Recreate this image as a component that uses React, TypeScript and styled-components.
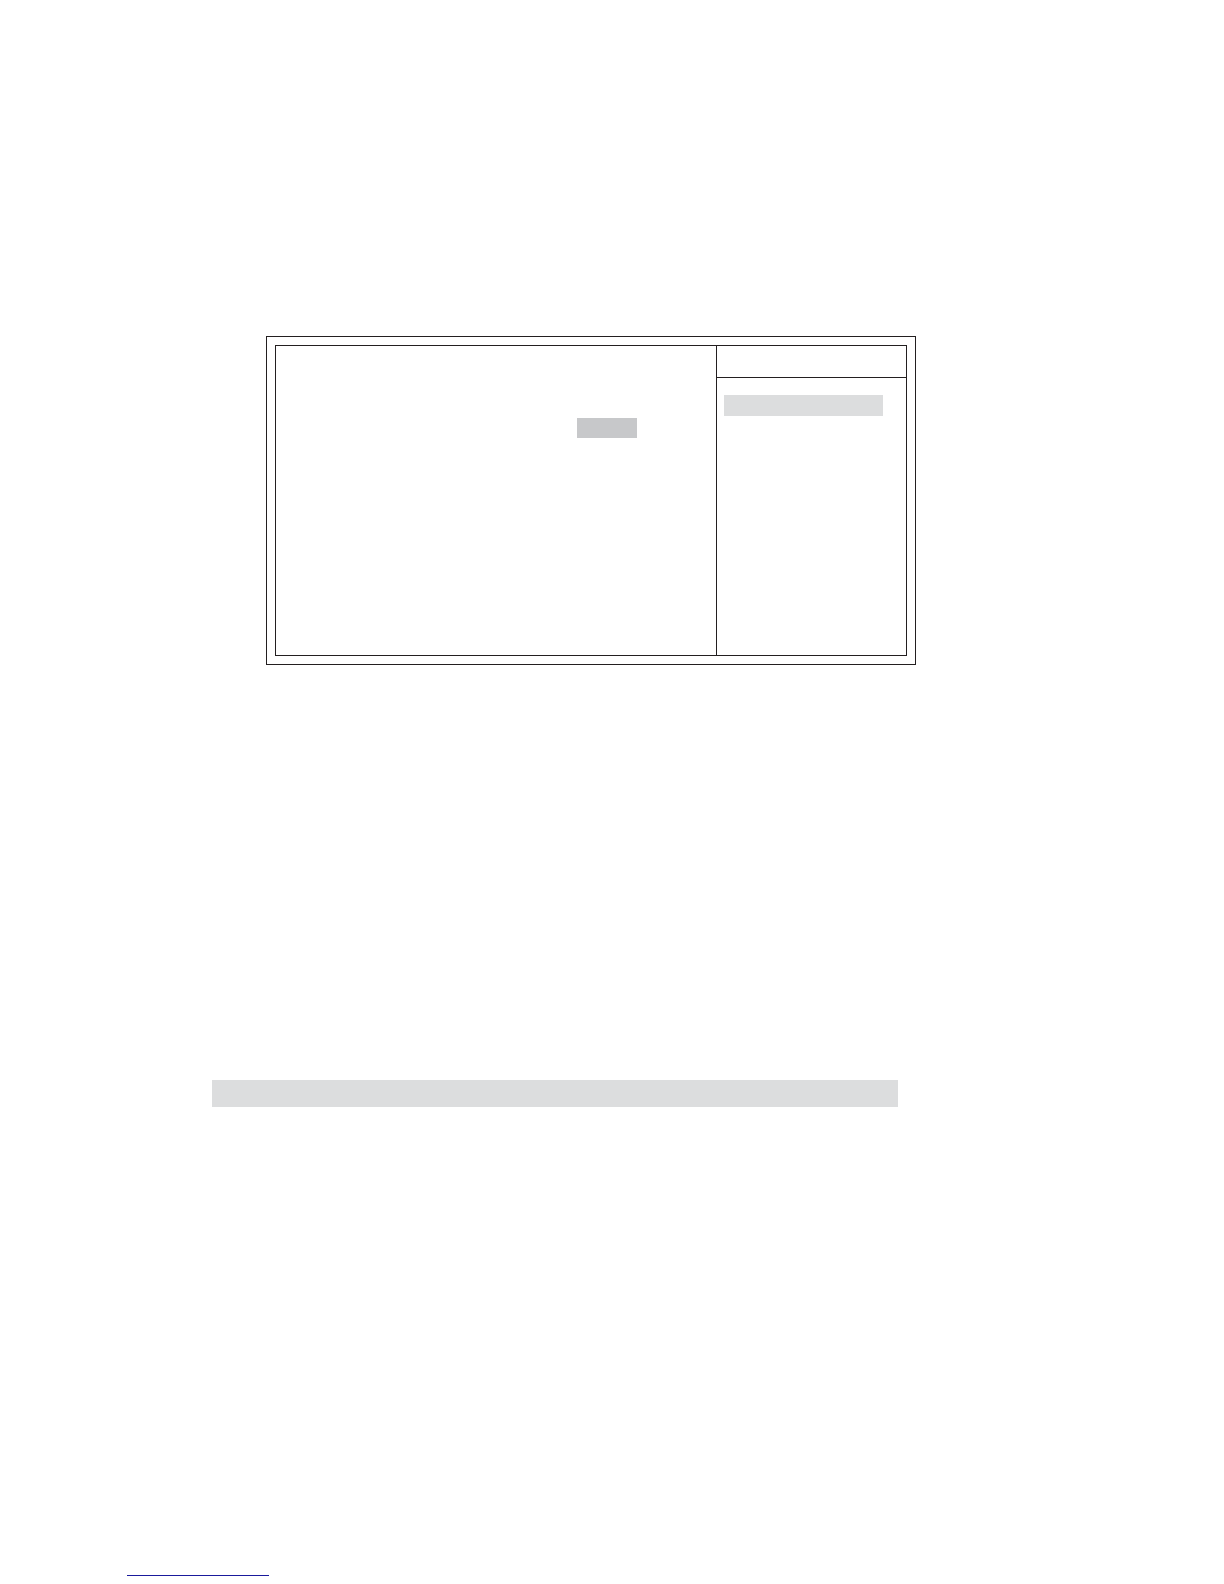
import React from "react";
import styled, { createGlobalStyle } from "styled-components";

const ink = "#231f20";
const paleGrey = "#dcddde";
const midGrey = "#c7c8ca";
const linkBlue = "#1a1a9c";

const GlobalStyle = createGlobalStyle`
  *, *::before, *::after { box-sizing: border-box; }
  body {
    margin: 0;
    background: #ffffff;
    color: ${ink};
    font-family: "Liberation Sans", Arial, sans-serif;
  }
`;

const Page = styled.div`
  display: flex;
  flex-direction: column;
  min-height: 100vh;
  padding-bottom: 8px;
`;

const Content = styled.main`
  flex: 1;
  display: flex;
  flex-direction: column;
  gap: 415px;
  padding: 336px 308px 0 212px;
`;

const SetupFrame = styled.section`
  margin-left: 54px;
  padding: 8px;
  border: 1px solid ${ink};
`;

const SetupScreen = styled.div`
  display: grid;
  grid-template-columns: minmax(0, 1fr) 190px;
  min-height: 311px;
  border: 1px solid ${ink};
`;

const SettingsPane = styled.div`
  display: flex;
  align-items: flex-start;
  justify-content: flex-end;
  padding: 72px 79px 0 0;
`;

const HelpPane = styled.aside`
  display: flex;
  flex-direction: column;
  border-left: 1px solid ${ink};
`;

const HelpHeader = styled.header`
  height: 32px;
  border-bottom: 1px solid ${ink};
`;

const HelpBody = styled.div`
  padding: 17px 23px 0 7px;
`;

const SelectedValue = styled.div`
  width: 60px;
  height: 20px;
  background: ${midGrey};
`;

const MenuLevel = styled.div`
  height: 21px;
  background: ${paleGrey};
`;

const TableBand = styled.div`
  height: 27px;
  margin-right: 18px;
  background: ${paleGrey};
`;

const Footer = styled.footer`
  padding-left: 127px;
`;

const FooterRule = styled.hr`
  width: 142px;
  height: 1px;
  margin: 0;
  border: 0;
  background: ${linkBlue};
`;

export default function App() {
  return (
    <>
      <GlobalStyle />
      <Page>
        <Content>
          <SetupFrame>
            <SetupScreen>
              <SettingsPane>
                <SelectedValue />
              </SettingsPane>
              <HelpPane>
                <HelpHeader />
                <HelpBody>
                  <MenuLevel />
                </HelpBody>
              </HelpPane>
            </SetupScreen>
          </SetupFrame>
          <TableBand />
        </Content>
        <Footer>
          <FooterRule />
        </Footer>
      </Page>
    </>
  );
}
